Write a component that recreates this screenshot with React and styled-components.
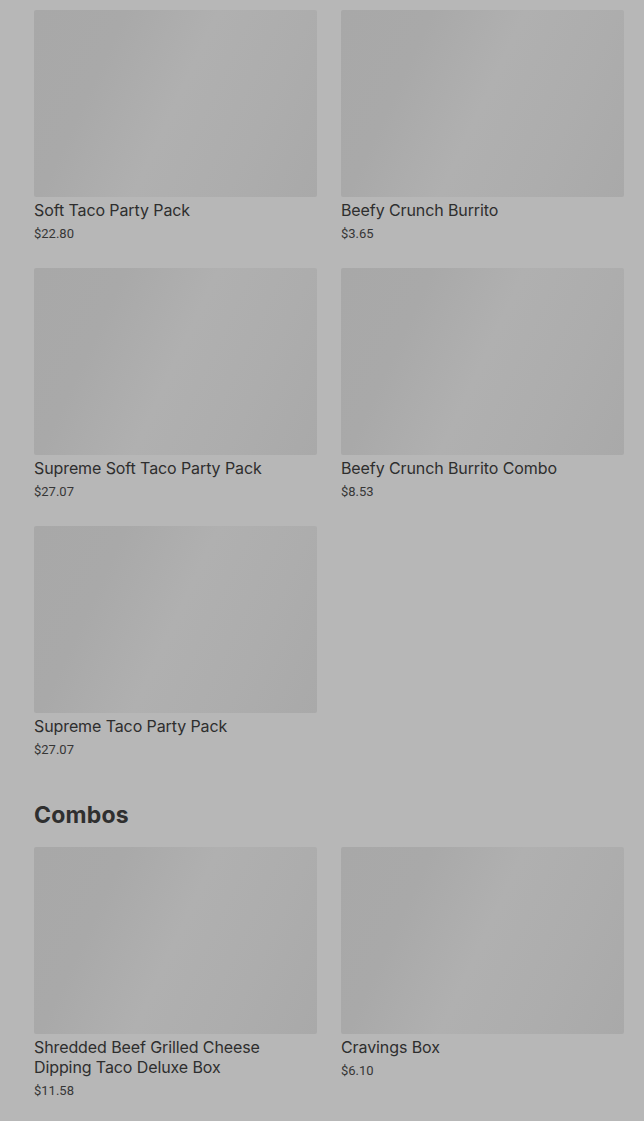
import React from 'react'
import styled, { createGlobalStyle } from 'styled-components'

const GlobalStyle = createGlobalStyle`
  html, body {
    margin: 0;
    padding: 0;
    background: #b7b7b7;
  }
`

const popular = [
  { name: 'Soft Taco Party Pack', price: '$22.80' },
  { name: 'Beefy Crunch Burrito', price: '$3.65' },
  { name: 'Supreme Soft Taco Party Pack', price: '$27.07' },
  { name: 'Beefy Crunch Burrito Combo', price: '$8.53' },
  { name: 'Supreme Taco Party Pack', price: '$27.07' },
]

const combos = [
  { name: 'Shredded Beef Grilled Cheese Dipping Taco Deluxe Box', price: '$11.58' },
  { name: 'Cravings Box', price: '$6.10' },
]

const App = () => {
  return (
    <Page>
      <GlobalStyle />
      <Grid>
        {popular.map((item, i) => (
          <Card key={i}>
            <Thumb />
            <Title>{item.name}</Title>
            <Price>{item.price}</Price>
          </Card>
        ))}
      </Grid>

      <Heading>Combos</Heading>

      <Grid>
        {combos.map((item, i) => (
          <Card key={i}>
            <Thumb />
            <Title>{item.name}</Title>
            <Price>{item.price}</Price>
          </Card>
        ))}
      </Grid>
    </Page>
  )
}

export default App

const Page = styled.div`
  width: 644px;
  height: 1121px;
  overflow: hidden;
  box-sizing: border-box;
  padding: 10px 20px 0 34px;
  background: #b7b7b7;
`

const Grid = styled.div`
  display: grid;
  grid-template-columns: 283px 283px;
  column-gap: 24px;
  row-gap: 25px;
`

const Card = styled.div`
  display: flex;
  flex-direction: column;
`

const Thumb = styled.div`
  height: 187px;
  border-radius: 2px;
  background: linear-gradient(115deg, #a8a8a8 0%, #a9a9a9 25%, #b0b0b0 50%, #adadad 75%, #a9a9a9 100%);
`

const Title = styled.div`
  margin-top: 3px;
  font-family: Inter, Roboto, 'Liberation Sans', sans-serif;
  font-weight: 400;
  font-size: 16px;
  line-height: 20px;
  letter-spacing: -0.1px;
  color: #2e2e2e;
  padding-right: 20px;
`

const Price = styled.div`
  margin-top: 5px;
  font-family: Roboto, 'Liberation Sans', sans-serif;
  font-size: 13px;
  line-height: 18px;
  color: #363636;
`

const Heading = styled.h2`
  margin: 41px 0 17px;
  font-family: Inter, 'Noto Sans', sans-serif;
  font-weight: 700;
  font-size: 23px;
  line-height: 30px;
  letter-spacing: 0.2px;
  color: #2f2f2f;
`
